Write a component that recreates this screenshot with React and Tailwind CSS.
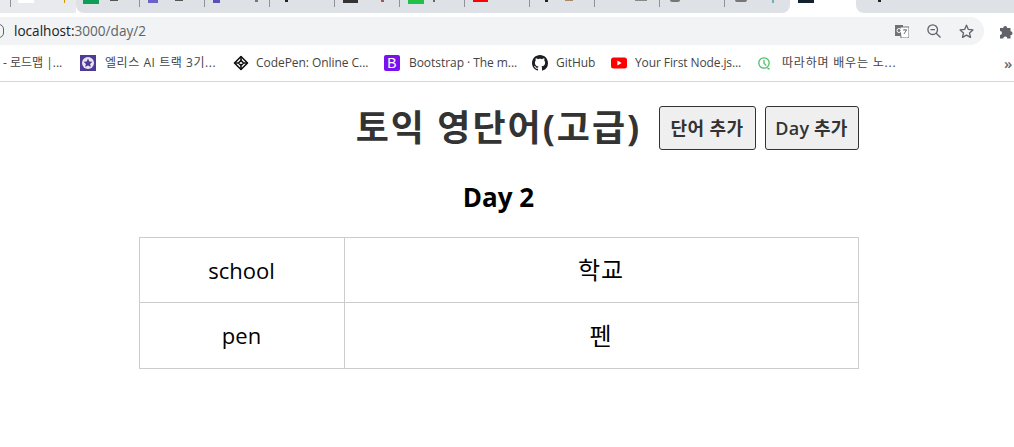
import React from 'react';

const uiFont = "font-['Open_Sans','Noto_Sans_CJK_KR',sans-serif]";

// Tabs are cut off by the top of the screenshot, only slivers of the favicons show
const tabs = [
  { w: 'w-[64px]', pad: 'pl-[7px] gap-[11px]', icon: 'w-4 h-[4px] bg-[#0f9d58]', text: 'w-2 h-px bg-[#555]' },
  { w: 'w-[65px]', pad: 'pl-[8px] gap-[17px]', icon: 'w-[10px] h-[3px] bg-[#6a62c9]', text: 'w-2 h-px bg-[#555]' },
  { w: 'w-[65px]', pad: 'pl-[8px] gap-[35px]', icon: 'w-[7px] h-[3px] bg-[#5b50b5]', text: 'w-[3px] h-[2px] bg-[#777]' },
  { w: 'w-[65px]', pad: 'pl-[15px] gap-0', icon: 'w-[3px] h-[2px] bg-[#222]', text: 'w-0 h-0' },
  { w: 'w-[65px]', pad: 'pl-[8px] gap-[23px]', icon: 'w-[15px] h-[3px] bg-[#333]', text: 'w-[3px] h-[2px] bg-[#a55]' },
  { w: 'w-[65px]', pad: 'pl-[8px] gap-[9px]', icon: 'w-4 h-[4px] bg-[#1fc14a]', text: 'w-[2px] h-[2px] bg-[#666]' },
  { w: 'w-[65px]', pad: 'pl-[8px] gap-0', icon: 'w-[15px] h-[2px] bg-[#f00]', text: 'w-0 h-0' },
  { w: 'w-[65px]', pad: 'pl-[15px] gap-[17px]', icon: 'w-[3px] h-[2px] bg-[#222]', text: 'w-2 h-px bg-[#a86]' },
  { w: 'w-[65px]', pad: 'pl-[40px] gap-0', icon: 'w-0 h-0', text: 'w-3 h-px bg-[#888]' },
  { w: 'w-[65px]', pad: 'pl-[10px] gap-0', icon: 'w-[10px] h-[2px] bg-[#777] rounded-b-full', text: 'w-0 h-0' },
  { w: 'w-[65px]', pad: 'pl-[10px] gap-[25px]', icon: 'w-[12px] h-[2px] bg-[#777] rounded-b-full', text: 'w-[2px] h-[3px] bg-[#7ab]' },
];

const bookmarks = [
  { label: '엘리스 AI 트랙 3기...', box: 'ml-[5px] w-[153px] gap-[9px]', text: 'tracking-[0.55px]', icon: 'elice' },
  { label: 'CodePen: Online C...', box: 'w-[151px] gap-[7px]', text: 'tracking-[-0.05px]', icon: 'codepen' },
  { label: 'Bootstrap · The m...', box: 'w-[148px] gap-[9px]', text: 'tracking-[-0.05px]', icon: 'bootstrap' },
  { label: 'GitHub', box: 'w-[79px] gap-[8px]', text: 'tracking-[-0.05px]', icon: 'github' },
  { label: 'Your First Node.js...', box: 'w-[147px] gap-[8px]', text: 'tracking-[-0.1px]', icon: 'youtube' },
  { label: '따라하며 배우는 노...', box: 'w-[247px] gap-[8px]', text: 'tracking-[0.8px]', icon: 'clock' },
];

function BookmarkIcon({ name }) {
  if (name === 'elice') {
    return (
      <svg width="16" height="16" viewBox="0 0 16 16">
        <rect width="16" height="16" fill="#4f3a96" />
        <circle cx="8" cy="8" r="6" fill="#e8e4f4" />
        <path d="M8 3.6l1.3 2.9 3.1.3-2.3 2.1.7 3.1L8 10.5l-2.8 1.5.7-3.1-2.3-2.1 3.1-.3z" fill="#4f3a96" />
      </svg>
    );
  }
  if (name === 'codepen') {
    return (
      <svg width="16" height="16" viewBox="0 0 16 16" fill="none" stroke="#111" strokeWidth="1.6" strokeLinejoin="round">
        <path d="M8 1.5L14.5 8 8 14.5 1.5 8z" />
        <path d="M8 5.5L10.5 8 8 10.5 5.5 8zM8 1.5v4M8 10.5v4M1.5 8h4M10.5 8h4" />
      </svg>
    );
  }
  if (name === 'bootstrap') {
    return (
      <div className="w-4 h-4 rounded-[2px] bg-[#7a10ee] text-white text-[14px] leading-4 text-center font-['Liberation_Sans',sans-serif]">
        B
      </div>
    );
  }
  if (name === 'github') {
    return (
      <svg width="16" height="16" viewBox="0 0 16 16" fill="#1b1f23">
        <path d="M8 0C3.58 0 0 3.58 0 8c0 3.54 2.29 6.53 5.47 7.59.4.07.55-.17.55-.38 0-.19-.01-.82-.01-1.49-2.01.37-2.53-.49-2.69-.94-.09-.23-.48-.94-.82-1.13-.28-.15-.68-.52-.01-.53.63-.01 1.08.58 1.23.82.72 1.21 1.87.87 2.33.66.07-.52.28-.87.51-1.07-1.78-.2-3.64-.89-3.64-3.95 0-.87.31-1.59.82-2.15-.08-.2-.36-1.02.08-2.12 0 0 .67-.21 2.2.82.64-.18 1.32-.27 2-.27s1.36.09 2 .27c1.53-1.04 2.2-.82 2.2-.82.44 1.1.16 1.92.08 2.12.51.56.82 1.27.82 2.15 0 3.07-1.87 3.75-3.65 3.95.29.25.54.73.54 1.48 0 1.07-.01 1.93-.01 2.2 0 .21.15.46.55.38A8.01 8.01 0 0016 8c0-4.42-3.58-8-8-8z" />
      </svg>
    );
  }
  if (name === 'youtube') {
    return (
      <svg width="16" height="16" viewBox="0 0 16 16">
        <rect y="2.5" width="16" height="11" rx="2.5" fill="#f00" />
        <path d="M6.4 5.5L10.6 8l-4.2 2.5z" fill="#fff" />
      </svg>
    );
  }
  return (
    <svg width="16" height="16" viewBox="0 0 16 16" fill="none" stroke="#4fbf6b" strokeWidth="1.3" className="ml-[-2px] mr-[2px]">
      <circle cx="8" cy="8" r="5.2" />
      <path d="M8 5v3.2l2.2 2.4M11.5 13.5l2 .5" />
    </svg>
  );
}

function TabStrip() {
  return (
    <div className="flex h-[13px] bg-white overflow-hidden">
      <div className="flex w-[76px] shrink-0 bg-[#e8eaed] pl-[10px]">
        <div className="w-px h-[7px] bg-[#8f9296]" />
        <div className="w-4 h-[3px] bg-white ml-[7px]" />
        <div className="w-px h-[3px] bg-[#c90] ml-[30px]" />
      </div>
      <div className="flex w-[714px] shrink-0 bg-[#dee1e6] rounded-b-lg overflow-hidden">
        {tabs.map((tab, i) => (
          <div key={i} className={`${tab.w} shrink-0 flex`}>
            <div className={`flex-1 flex ${tab.pad}`}>
              <div className={tab.icon} />
              <div className={tab.text} />
            </div>
            {i < tabs.length - 1 && <div className="w-px h-[7px] bg-[#8f9296]" />}
          </div>
        ))}
      </div>
      <div className="w-[66px] shrink-0 bg-white pl-[8px]">
        <div className="w-4 h-[3px] bg-[#12232e]" />
      </div>
      <div className="flex-1 bg-[#dee1e6] rounded-bl-lg pl-[22px]">
        <div className="w-[3px] h-[2px] bg-[#222]" />
      </div>
    </div>
  );
}

function Toolbar() {
  return (
    <div className="flex h-8 bg-white pt-1 items-stretch">
      <div className={`${uiFont} w-[985px] h-7 bg-[#f1f3f4] rounded-r-[14px] flex items-center text-[13.6px] pr-[10px]`}>
        <div className="w-[10px] h-[14px] -ml-[6px] mr-[10px] rounded-full border-[1.5px] border-[#5f6368]" />
        <span className="text-[#202124]">localhost:</span>
        <span className="text-[#5f6368]">3000/day/2</span>
        <div className="ml-auto flex items-center gap-[18px]">
          <svg width="14" height="14" viewBox="0 0 14 14">
            <path d="M0 1h8v11H0z" fill="#6f7377" />
            <path d="M5 3h9v11H6z" fill="#fff" stroke="#6f7377" />
            <path d="M8 6h4M10 5v1M9 10l2.5-4" stroke="#6f7377" fill="none" />
            <circle cx="4" cy="6.5" r="2" fill="none" stroke="#fff" />
          </svg>
          <svg width="14" height="14" viewBox="0 0 14 14" fill="none" stroke="#5f6368" strokeWidth="1.3">
            <circle cx="5.7" cy="5.7" r="4.8" />
            <path d="M3.5 5.7h4.4M9.2 9.2L13.5 13.5" />
          </svg>
          <svg width="15" height="15" viewBox="0 0 15 15" fill="none" stroke="#5f6368" strokeWidth="1.3" strokeLinejoin="round">
            <path d="M7.5 1.2l1.9 4.2 4.5.5-3.4 3 1 4.5-4-2.3-4 2.3 1-4.5-3.4-3 4.5-.5z" />
          </svg>
        </div>
      </div>
      <svg width="15" height="15" viewBox="0 0 15 15" fill="#5f6368" className="ml-[15px] mt-[7px] shrink-0">
        <path d="M1 4h3.2a2 2 0 1 1 4 0h3.3v3.2a2 2 0 1 1 0 4V14.5H8.3a2 2 0 1 0-4 0H1v-3.5a2 2 0 1 0 0-4z" />
      </svg>
    </div>
  );
}

function BookmarkBar() {
  return (
    <div className={`${uiFont} flex items-center h-[37px] border-b border-[#d4d6d9] text-[12px] text-[#444] whitespace-nowrap overflow-hidden`}>
      <span className="w-[75px] pl-[3px] shrink-0">- 로드맵 |...</span>
      {bookmarks.map((b) => (
        <div key={b.label} className={`${b.box} flex items-center shrink-0`}>
          <BookmarkIcon name={b.icon} />
          <span className={b.text}>{b.label}</span>
        </div>
      ))}
      <span className="ml-[-1px] text-[15px] leading-none font-semibold text-[#666]">»</span>
    </div>
  );
}

function App() {
  const words = [
    { eng: 'school', kor: '학교', row: 'h-[65px]' },
    { eng: 'pen', kor: '펜', row: 'h-[66px]' },
  ];

  return (
    <div className={`${uiFont} w-[1014px] h-[447px] bg-white overflow-hidden`}>
      <TabStrip />
      <Toolbar />
      <BookmarkBar />
      {/* page is narrower than the window, the scrollbar is off the picture */}
      <div className="w-[997px]">
        <div className="w-[720px] mx-auto">
          <div className="grid grid-cols-[1fr_auto_1fr] items-center pt-6">
            <div />
            <h1 className="text-[36px] leading-[44px] font-bold tracking-[2px] text-[#333]">토익 영단어(고급)</h1>
            <div className="flex justify-end gap-[9px]">
              <button className="w-[97px] h-11 bg-[#efefef] border border-[#333] rounded-[3px] text-[18px] tracking-[0.4px] font-semibold text-[#333] whitespace-nowrap">
                단어 추가
              </button>
              <button className="w-[94px] h-11 bg-[#efefef] border border-[#333] rounded-[3px] text-[18px] tracking-[0.2px] font-semibold text-[#333] whitespace-nowrap">
                Day 추가
              </button>
            </div>
          </div>
          <h2 className="text-center text-[26px] leading-[35px] font-bold text-black mt-[30px] mb-[22px]">Day 2</h2>
          <table className="w-[720px] border-collapse table-fixed">
            <tbody>
              {words.map((word) => (
                <tr key={word.eng} className={word.row}>
                  <td className="w-[205px] border border-[#ccc] text-center text-[22px] text-black">{word.eng}</td>
                  <td className="border border-[#ccc] text-center text-[24px] tracking-[1px] text-black">{word.kor}</td>
                </tr>
              ))}
            </tbody>
          </table>
        </div>
      </div>
    </div>
  );
}

export default App;
